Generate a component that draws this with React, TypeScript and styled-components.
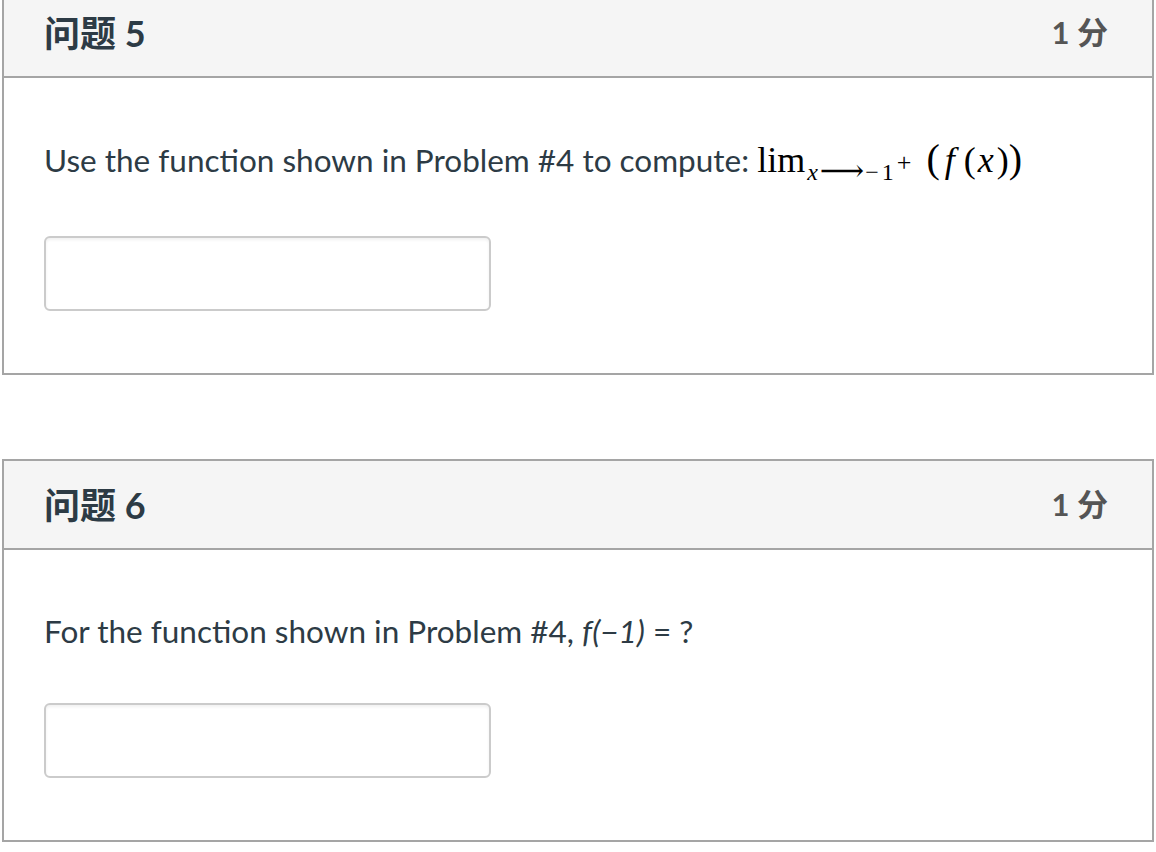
import React, { FC } from 'react'
import styled, { createGlobalStyle } from 'styled-components'

const GlobalStyle = createGlobalStyle`
  body {
    margin: 0;
    background: #fff;
    font-family: Lato, "Noto Sans CJK SC", sans-serif;
    color: #2d3b45;
  }
`

const Page = styled.div`
  display: flex;
  flex-direction: column;
  gap: 84px;
  padding: 0 2px;
  margin-top: -13px;
`

const Card = styled.section`
  border: 2px solid #a5a5a5;
  background: #fff;
`

const Header = styled.header`
  display: flex;
  align-items: center;
  justify-content: space-between;
  height: 87px;
  padding: 0 44px 0 40px;
  background: #f5f5f5;
  border-bottom: 2px solid #a5a5a5;
`

const Title = styled.h2`
  margin: 0 0 4px;
  font-size: 36px;
  font-weight: 700;
  color: #2d3b45;
`

const Points = styled.span`
  margin-bottom: 4px;
  font-size: 31px;
  font-weight: 700;
  color: #555;
`

const Body = styled.div`
  padding: 59px 40px 62px;
`

const Question = styled.p`
  margin: 0 0 50px;
  font-size: 31.5px;
  line-height: 44px;
  color: #2d3b45;
`

const Answer = styled.input`
  display: block;
  box-sizing: border-box;
  width: 447px;
  height: 75px;
  border: 2px solid #cbcbcb;
  border-radius: 6px;
  box-shadow: inset 0 2px 3px rgba(0, 0, 0, 0.06);
  background: #fff;
  outline: none;
`

const Math = styled.span`
  font-family: "Liberation Serif", "DejaVu Serif", serif;
  font-size: 36px;
  color: #000;
  white-space: nowrap;
`

const Sub = styled.span`
  font-size: 24px;
  position: relative;
  top: 8px;
  margin-left: 2px;
`

const Arrow = styled.span`
  font-family: "DejaVu Serif", serif;
  font-size: 31px;
  position: relative;
  top: 1px;
  margin: 0 1px 0 2px;
`

const Minus = styled.span`
  margin-right: 3px;
`

const Sup = styled.span`
  font-size: 26px;
  position: relative;
  top: -9px;
  margin-left: 3px;
`

const It = styled.i`
  font-style: italic;
`

const Group = styled.span`
  margin-left: 15px;
`

const Paren = styled.span`
  font-size: 40px;
`

const Gap = styled.span<{ $w: number }>`
  display: inline-block;
  width: ${(p) => p.$w}px;
`

const LimitExpr: FC = () => (
  <Math>
    lim
    <Sub>
      <It>x</It>
      <Arrow>⟶</Arrow>
      <Minus>−</Minus>1<Sup>+</Sup>
    </Sub>
    <Group>
      <Paren>(</Paren>
      <Gap $w={5} />
      <It>f</It>
      <Gap $w={9} />(<Gap $w={2} />
      <It>x</It>
      <Gap $w={3} />)<Paren>)</Paren>
    </Group>
  </Math>
)

interface IQuestion {
  title: string
  points: string
  text: React.ReactNode
}

const questions: IQuestion[] = [
  {
    title: '问题 5',
    points: '1 分',
    text: (
      <>
        Use the function shown in Problem #4 to compute: <LimitExpr />
      </>
    ),
  },
  {
    title: '问题 6',
    points: '1 分',
    text: (
      <>
        For the function shown in Problem #4, <It>f(−1)</It> = ?
      </>
    ),
  },
]

const App: FC = () => (
  <>
    <GlobalStyle />
    <Page>
      {questions.map((q, index) => (
        <Card key={index}>
          <Header>
            <Title>{q.title}</Title>
            <Points>{q.points}</Points>
          </Header>
          <Body>
            <Question>{q.text}</Question>
            <Answer type="text" />
          </Body>
        </Card>
      ))}
    </Page>
  </>
)

export default App
